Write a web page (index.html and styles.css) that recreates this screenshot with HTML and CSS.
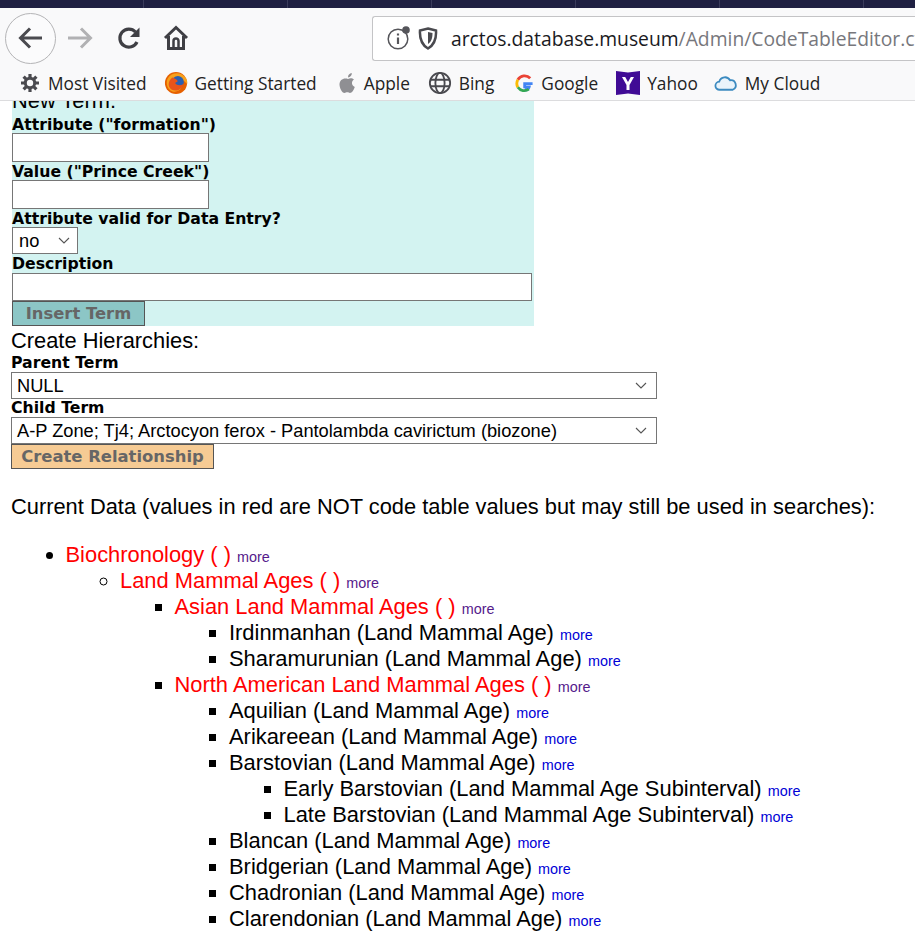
FILE: index.html
```html
<!DOCTYPE html>
<html lang="en">
<head>
    <meta charset="UTF-8">
    <meta name="viewport" content="width=device-width, initial-scale=1.0">
    <title>Code Table Editor</title>
    <link rel="stylesheet" href="styles.css">
</head>
<body>
    <div class="tabstrip"></div>

    <div class="toolbar">
        <div class="back-btn">
            <svg width="28" height="28" viewBox="0 0 28 28"><path d="M25 14H4M13 4.500L3.500 14l9.500 9.500" fill="none" stroke="#4a4a4f" stroke-width="3"/></svg>
        </div>
        <svg class="tool-icon fwd" width="28" height="28" viewBox="0 0 28 28"><path d="M2 14h21M15 4.500l9.500 9.500-9.500 9.500" fill="none" stroke="#b1b1b3" stroke-width="3"/></svg>
        <svg class="tool-icon reload" width="26" height="26" viewBox="0 0 26 26"><path d="M19.500 7A9 9 0 1 0 21 17" fill="none" stroke="#3f3f44" stroke-width="3.200"/><path d="M23.500 2.500v9.500h-9.500z" fill="#3f3f44"/></svg>
        <svg class="tool-icon home" width="26" height="26" viewBox="0 0 26 26"><path d="M2 13L13 2.500 24 13M5.500 11v12.500h15V11" fill="none" stroke="#3f3f44" stroke-width="3"/><path d="M10.500 23.500v-7.500a2.500 2.500 0 0 1 5 0v7.500z" fill="none" stroke="#3f3f44" stroke-width="2.500"/></svg>
        <div class="urlbar">
            <svg width="24" height="26" viewBox="0 0 24 26"><circle cx="11" cy="14" r="9.800" fill="none" stroke="#55555a" stroke-width="1.500"/><path d="M11 12.500v6.500M11 8.500v2" stroke="#55555a" stroke-width="2.200"/><circle cx="19" cy="5" r="3.800" fill="#55555a"/></svg>
            <svg class="shield" width="20" height="24" viewBox="0 0 20 24"><path d="M10 2.500L18 4.500c.5 8-1 14-8 18-7-4-8.500-10-8-18z" fill="none" stroke="#4a4a4f" stroke-width="2.500"/><path d="M10 6l4.500 1c0 5-1 8.500-4.500 11z" fill="#4a4a4f"/></svg>
            <span class="url-text"><span class="url-host">arctos.database.museum</span><span class="url-path">/Admin/CodeTableEditor.cfm</span></span>
        </div>
    </div>

    <div class="bookmarks">
        <a class="bm">
            <svg width="22" height="22" viewBox="0 0 22 22"><path d="M11 2v18M2 11h18M4.600 4.600l12.800 12.800M17.400 4.600L4.600 17.400" stroke="#4a4a4f" stroke-width="3.200"/><circle cx="11" cy="11" r="6.200" fill="#4a4a4f"/><circle cx="11" cy="11" r="3.200" fill="#f9f9fa"/></svg>
            Most Visited
        </a>
        <a class="bm">
            <svg width="24" height="24" viewBox="0 0 26 26"><circle cx="13" cy="13" r="12" fill="#e66000"/><path d="M4 8C8 1 19 0 24 8c2 4 1 6 1 6-4-5-8-6-11-5l-2 3c3 3 8 2 7 6-2 4-8 6-12 3C3 18 2 12 4 8z" fill="#f7a11b"/><circle cx="15" cy="12" r="6.500" fill="#2b5fb0"/><path d="M9 7c3 1 5 2 6 4l-3 2c2 3 6 3 9 1-1 6-8 9-13 6-4-3-4-9 1-13z" fill="#e8541a"/></svg>
            Getting Started
        </a>
        <a class="bm bm-apple">
            <svg width="18" height="22" viewBox="0 0 18 22"><path d="M9 7c1.500-1 4-1.500 6 .5-3 2-2.500 6 .800 7.500-1 3-3 6-4.800 6-1 0-1.500-.7-2.700-.7S6.500 21 5.500 21C3 21 .5 16 .5 12.500.5 8 4.500 5.500 9 7zM9 5.500C8.800 3.200 10.500 1.200 12.800 1c.2 2.300-1.500 4.300-3.800 4.500z" fill="#8f8f93"/></svg>
            Apple
        </a>
        <a class="bm bm-bing">
            <svg width="24" height="24" viewBox="0 0 26 26"><g fill="none" stroke="#4a4a4f" stroke-width="2"><circle cx="13" cy="13" r="11"/><ellipse cx="13" cy="13" rx="5" ry="11"/><path d="M2.500 9.500h21M2.500 16.500h21"/></g></svg>
            Bing
        </a>
        <a class="bm bm-google">
            <svg width="19" height="19" viewBox="0 0 20 20"><path d="M18.500 10.200H10.200v3.300h4.700c-.5 2.100-2.300 3.300-4.700 3.300" fill="none" stroke="#4285f4" stroke-width="3"/><path d="M16 4.500A8.200 8.200 0 0 0 3 6" fill="none" stroke="#ea4335" stroke-width="3"/><path d="M3 6a8.200 8.200 0 0 0 0 8" fill="none" stroke="#fbbc05" stroke-width="3"/><path d="M3 14a8.200 8.200 0 0 0 11.500 2" fill="none" stroke="#34a853" stroke-width="3"/></svg>
            Google
        </a>
        <a class="bm bm-yahoo">
            <svg width="24" height="24" viewBox="0 0 24 24"><path d="M0 0l12 1.500L24 0v24l-12-1.500L0 24z" fill="#400b95"/><path d="M6 6h3.200L12 11l2.800-5H18l-4.500 8v5h-3v-5z" fill="#fff"/></svg>
            Yahoo
        </a>
        <a class="bm bm-cloud">
            <svg width="24" height="18" viewBox="0 0 26 20"><path d="M6 17.500a4.500 4.500 0 0 1-.5-9 6.500 6.500 0 0 1 12-1.500 5.500 5.500 0 0 1 3 10.500z" fill="#eaf4fb" stroke="#3d8bc0" stroke-width="2"/></svg>
            My Cloud
        </a>
    </div>

    <div class="viewport">
        <div class="page">
            <form class="new-term">
                <div class="section-title">New Term:</div>
                <label>Attribute ("formation")</label>
                <input class="short-input" type="text">
                <label>Value ("Prince Creek")</label>
                <input class="short-input" type="text">
                <label>Attribute valid for Data Entry?</label>
                <div class="select no-select">no <svg class="chev" width="12" height="7" viewBox="0 0 12 7"><path d="M1 1l5 5 5-5" fill="none" stroke="#555" stroke-width="1.100"/></svg></div>
                <label class="tight-label">Description</label>
                <input class="long-input" type="text">
                <button class="btn insert-btn" type="button">Insert Term</button>
            </form>

            <div class="hierarchies">
                <div class="section-title">Create Hierarchies:</div>
                <label class="tight-label">Parent Term</label>
                <div class="select wide-select">NULL <svg class="chev" width="12" height="7" viewBox="0 0 12 7"><path d="M1 1l5 5 5-5" fill="none" stroke="#555" stroke-width="1.100"/></svg></div>
                <label class="tight-label">Child Term</label>
                <div class="select wide-select">A-P Zone; Tj4; Arctocyon ferox - Pantolambda cavirictum (biozone) <svg class="chev" width="12" height="7" viewBox="0 0 12 7"><path d="M1 1l5 5 5-5" fill="none" stroke="#555" stroke-width="1.100"/></svg></div>
                <button class="btn create-btn" type="button">Create Relationship</button>
            </div>

            <p class="current">Current Data (values in red are NOT code table values but may still be used in searches):</p>

            <ul class="tree">
                <li><span class="red">Biochronology ( )</span> <a class="more visited">more</a>
                    <ul>
                        <li><span class="red">Land Mammal Ages ( )</span> <a class="more visited">more</a>
                            <ul>
                                <li><span class="red">Asian Land Mammal Ages ( )</span> <a class="more visited">more</a>
                                    <ul>
                                        <li>Irdinmanhan (Land Mammal Age) <a class="more">more</a></li>
                                        <li>Sharamurunian (Land Mammal Age) <a class="more">more</a></li>
                                    </ul>
                                </li>
                                <li><span class="red">North American Land Mammal Ages ( )</span> <a class="more visited">more</a>
                                    <ul>
                                        <li>Aquilian (Land Mammal Age) <a class="more">more</a></li>
                                        <li>Arikareean (Land Mammal Age) <a class="more">more</a></li>
                                        <li>Barstovian (Land Mammal Age) <a class="more">more</a>
                                            <ul>
                                                <li>Early Barstovian (Land Mammal Age Subinterval) <a class="more">more</a></li>
                                                <li>Late Barstovian (Land Mammal Age Subinterval) <a class="more">more</a></li>
                                            </ul>
                                        </li>
                                        <li>Blancan (Land Mammal Age) <a class="more">more</a></li>
                                        <li>Bridgerian (Land Mammal Age) <a class="more">more</a></li>
                                        <li>Chadronian (Land Mammal Age) <a class="more">more</a></li>
                                        <li>Clarendonian (Land Mammal Age) <a class="more">more</a></li>
                                    </ul>
                                </li>
                            </ul>
                        </li>
                    </ul>
                </li>
            </ul>
        </div>
    </div>
</body>
</html>
```

FILE: styles.css
```css
/* General reset */
* {
    margin: 0;
    padding: 0;
    box-sizing: border-box;
}

html, body {
    height: 100%;
    overflow: hidden;
}

body {
    display: flex;
    flex-direction: column;
    font-family: 'Liberation Sans', Arial, sans-serif;
    background: #fff;
    color: #000;
}

/* Browser chrome */
.tabstrip {
    height: 8px;
    flex-shrink: 0;
    background: repeating-linear-gradient(90deg, #1f2042 0, #1f2042 143px, #3b3c5c 143px, #3b3c5c 144px);
}

.toolbar {
    height: 60px;
    flex-shrink: 0;
    background: #f9f9fa;
    display: flex;
    align-items: center;
    padding-left: 5px;
    overflow: hidden;
}

.back-btn {
    width: 51px;
    height: 51px;
    border: 1.500px solid #b4b4b6;
    border-radius: 50%;
    background: #fbfbfc;
    display: flex;
    align-items: center;
    justify-content: center;
    flex-shrink: 0;
}

.tool-icon {
    flex-shrink: 0;
}

.fwd {
    margin-left: 10px;
}

.reload {
    margin-left: 22px;
}

.home {
    margin-left: 21px;
}

.urlbar {
    flex-shrink: 0;
    width: 600px;
    height: 45px;
    margin-left: 183px;
    border: 1px solid #c4c4c6;
    border-right: none;
    border-radius: 3px 0 0 3px;
    background: #fff;
    display: flex;
    align-items: center;
    padding-left: 14px;
    white-space: nowrap;
    overflow: hidden;
}

.shield {
    margin-left: 7px;
}

.url-text {
    margin-left: 13px;
    font-family: 'Open Sans', sans-serif;
    font-size: 19.300px;
}

.url-host {
    color: #1a1a1e;
}

.url-path {
    color: #77777c;
}

.bookmarks {
    height: 33px;
    flex-shrink: 0;
    background: #f9f9fa;
    border-bottom: 1px solid #dcdcde;
    display: flex;
    align-items: center;
    gap: 17px;
    padding: 0 0 2px 19px;
    font-family: 'Open Sans', sans-serif;
    font-size: 17.300px;
    color: #222;
    white-space: nowrap;
}

.bm {
    display: flex;
    align-items: center;
    gap: 7px;
}

.bm-apple {
    margin-left: 5px;
}

.bm-bing {
    margin-left: 1px;
}

.bm-google {
    margin-left: 4px;
}

.bm-yahoo {
    margin-left: 1px;
}

.bm-cloud {
    margin-left: -1px;
}

/* Page content, scrolled a little */
.viewport {
    flex: 1;
    overflow: hidden;
}

.page {
    margin-top: -12px;
    padding-left: 11px;
}

.section-title {
    font-size: 21.850px;
    line-height: 23px;
}

.new-term .section-title {
    padding-bottom: 3px;
}

.hierarchies .section-title {
    line-height: 25px;
    margin-bottom: 1px;
}

label {
    display: block;
    padding-top: 1px;
    font-family: 'DejaVu Sans', Verdana, sans-serif;
    font-weight: bold;
    font-size: 15.700px;
    line-height: 17px;
    white-space: nowrap;
}

label.tight-label {
    padding-top: 0;
    padding-bottom: 1px;
}

input {
    display: block;
    background: #fff;
    border: 1px solid #767676;
    font-size: 20px;
}

/* New term form */
.new-term {
    width: 522px;
    margin-left: 1px;
    background: #d3f3f1;
}

.short-input {
    width: 197px;
    height: 29px;
}

.long-input {
    width: 520px;
    height: 28px;
}

.select {
    display: flex;
    align-items: center;
    justify-content: space-between;
    background: #fff;
    border: 1px solid #767676;
    font-size: 18.250px;
    white-space: nowrap;
}

.no-select {
    width: 66px;
    height: 27px;
    padding: 0 7px 0 6px;
    margin-bottom: 1px;
}

.wide-select {
    width: 646px;
    height: 27px;
    padding: 0 9px 0 5px;
}

.btn {
    display: block;
    height: 25px;
    border: 1px solid #555;
    font-family: 'DejaVu Sans', Verdana, sans-serif;
    font-weight: bold;
    font-size: 16.400px;
    color: #666;
}

.insert-btn {
    width: 133px;
    background: #8cc6c6;
}

.create-btn {
    width: 203px;
    background: #f6cb94;
}

/* Hierarchies */
.hierarchies {
    padding-top: 2px;
}

.current {
    margin-top: 25px;
    font-size: 21.850px;
    line-height: 26px;
}

/* Tree */
.tree {
    margin-top: 22px;
    font-size: 21.900px;
    line-height: 26px;
}

.tree ul {
    margin: 0;
}

ul {
    padding-left: 54.500px;
}

.red {
    color: #f00;
}

.more {
    font-size: 14.400px;
    line-height: 1;
    color: #0000d6;
}

.more.visited {
    color: #551a8b;
}
```
